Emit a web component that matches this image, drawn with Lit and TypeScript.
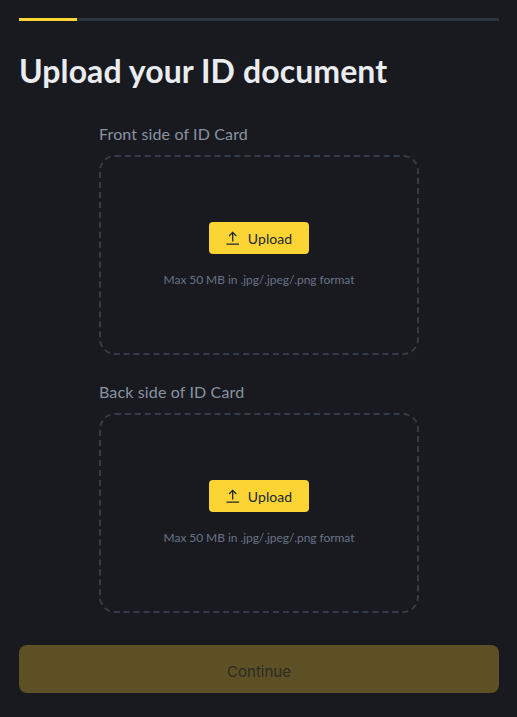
import { LitElement, html, css } from "lit";
import { customElement } from "lit/decorators.js";

@customElement("app-root")
export class AppRoot extends LitElement {
  static styles = css`
    :host {
      display: block;
      width: 517px;
      height: 717px;
      box-sizing: border-box;
      padding: 18px 18px 0 19px;
      background: #181a20;
      font-family: "Lato", "Liberation Sans", sans-serif;
      overflow: hidden;
    }
    .progress {
      height: 3px;
      background: #2b3240;
    }
    .progress-fill {
      width: 58px;
      height: 100%;
      background: #fcd535;
    }
    h1 {
      margin: 30px 0 0;
      font-size: 32px;
      line-height: 40px;
      font-weight: 700;
      letter-spacing: 0.09px;
      color: #eaecef;
    }
    .fields {
      width: 320px;
      margin: 32px auto 0;
      display: flex;
      flex-direction: column;
      gap: 26px;
    }
    .label {
      font-size: 16px;
      line-height: 22px;
      font-weight: 400;
      letter-spacing: 0.14px;
      color: #8a93a2;
      margin-bottom: 10px;
    }
    .drop {
      box-sizing: border-box;
      height: 200px;
      border: 2px dashed #363c47;
      border-radius: 16px;
      display: flex;
      flex-direction: column;
      align-items: center;
      justify-content: center;
      padding-top: 2px;
    }
    .upload {
      box-sizing: border-box;
      width: 100px;
      height: 32px;
      border: none;
      border-radius: 4px;
      background: #fcd535;
      color: #202630;
      font: inherit;
      font-size: 14px;
      letter-spacing: 0.06px;
      display: flex;
      align-items: center;
      justify-content: center;
      gap: 7px;
      padding: 0 1px 0 0;
    }
    .upload svg {
      width: 16px;
      height: 16px;
      flex: none;
    }
    .hint {
      margin-top: 16px;
      font-size: 12px;
      line-height: 20px;
      height: 20px;
      letter-spacing: -0.06px;
      color: #6a7385;
    }
    .continue {
      display: block;
      width: 100%;
      height: 48px;
      margin-top: 32px;
      border: none;
      border-radius: 8px;
      background: #5c5024;
      color: #2b2b27;
      font-family: "Inter", sans-serif;
      font-size: 15px;
      font-weight: 400;
      padding: 4px 0 0;
    }
  `;

  private field(label: string) {
    return html`
      <div>
        <div class="label">${label}</div>
        <div class="drop">
          <button class="upload">
            <svg viewBox="0 0 16 16" fill="none" stroke="currentColor" stroke-width="1.3">
              <path d="M1.5 14.2h12.5M7.7 11.5V2.5M4.1 6l3.6-3.6L11.3 6" />
            </svg>
            Upload
          </button>
          <div class="hint">Max 50 MB in .jpg/.jpeg/.png format</div>
        </div>
      </div>
    `;
  }

  render() {
    return html`
      <div class="progress"><div class="progress-fill"></div></div>
      <h1>Upload your ID document</h1>
      <div class="fields">
        ${this.field("Front side of ID Card")} ${this.field("Back side of ID Card")}
      </div>
      <button class="continue">Continue</button>
    `;
  }
}
